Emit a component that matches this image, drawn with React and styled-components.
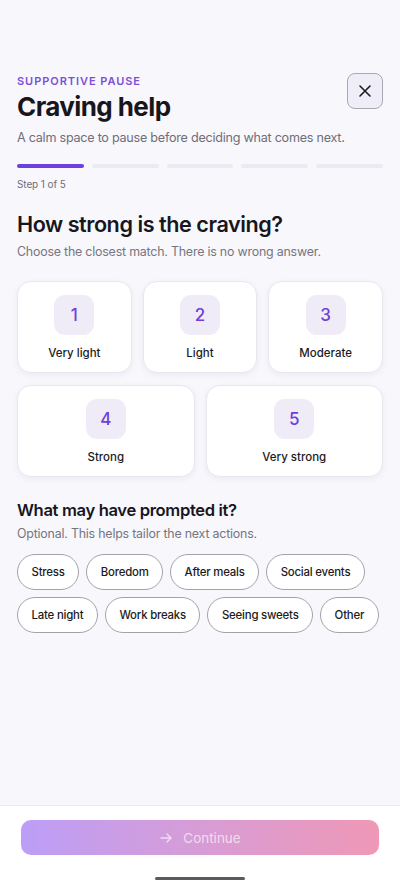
import React from "react";
import styled, { createGlobalStyle } from "styled-components";

const GlobalStyle = createGlobalStyle`
  * { box-sizing: border-box; }
  body {
    margin: 0;
    background: #f8f7fc;
    font-family: Inter, "Noto Sans", sans-serif;
    color: #17161c;
  }
`;

const Page = styled.div`
  min-height: 889px;
  display: flex;
  flex-direction: column;
  background: #f8f7fc;
`;

const Content = styled.main`
  flex: 1;
  padding: 72px 17px 0;
`;

const Header = styled.header`
  display: flex;
  justify-content: space-between;
  align-items: flex-start;
`;

const Eyebrow = styled.div`
  font-size: 11px;
  font-weight: 600;
  letter-spacing: 0.95px;
  color: #7c4fd6;
  margin-top: 2px;
  line-height: 14px;
`;

const Title = styled.h1`
  margin: 3px 0 0;
  font-size: 26px;
  font-weight: 700;
  letter-spacing: -0.6px;
  line-height: 32px;
`;

const CloseButton = styled.button`
  width: 36px;
  height: 36px;
  margin-top: 1px;
  border-radius: 8px;
  border: 1px solid #a9a7b2;
  background: #efedf8;
  display: flex;
  align-items: center;
  justify-content: center;
  padding: 0;
  color: #1c1b22;
`;

const Lead = styled.p`
  margin: 5px 0 0;
  font-size: 12.6px;
  color: #6f6e78;
  line-height: 20px;
  letter-spacing: -0.25px;
`;

const Progress = styled.div`
  display: grid;
  grid-template-columns: repeat(5, 1fr);
  gap: 8px;
  margin-top: 16px;
`;

const Segment = styled.div`
  height: 4px;
  border-radius: 2px;
  background: ${(p) => (p.$active ? "#6d3fe0" : "#ebeaf1")};
`;

const StepText = styled.div`
  margin-top: 9px;
  font-size: 10px;
  color: #6f6e78;
  line-height: 14px;
  letter-spacing: -0.1px;
`;

const Question = styled.h2`
  margin: 20px 0 0;
  font-size: 21.6px;
  font-weight: 600;
  letter-spacing: -0.45px;
  line-height: 26px;
`;

const Hint = styled.p`
  margin: ${(p) => (p.$small ? "4px" : "6px")} 0 0;
  font-size: 12.4px;
  color: #76757f;
  line-height: 18px;
  letter-spacing: -0.2px;
`;

const Grid = styled.div`
  display: grid;
  grid-template-columns: repeat(${(p) => p.$cols}, 1fr);
  gap: 11px;
  margin-top: ${(p) => p.$top}px;
`;

const Card = styled.button`
  height: 92px;
  background: #fff;
  border: 1px solid #e9e7ee;
  border-radius: 14px;
  box-shadow: 0 2px 6px rgba(40, 30, 80, 0.06);
  display: flex;
  flex-direction: column;
  align-items: center;
  padding: 13px 0 0;
  font-family: inherit;
  cursor: pointer;
`;

const Badge = styled.div`
  width: 40px;
  height: 40px;
  border-radius: 11px;
  background: #efecf8;
  color: #7040d8;
  font-size: 17px;
  font-weight: 500;
  display: flex;
  align-items: center;
  justify-content: center;
`;

const CardLabel = styled.div`
  margin-top: 11px;
  font-size: 11.5px;
  font-weight: 500;
  color: #1c1b22;
`;

const SubQuestion = styled.h3`
  margin: 22px 0 0;
  font-size: 16.6px;
  font-weight: 600;
  letter-spacing: -0.35px;
  line-height: 22px;
`;

const Chips = styled.div`
  display: flex;
  flex-wrap: wrap;
  gap: 7px;
  margin-top: 11px;
`;

const Chip = styled.button`
  height: 36px;
  padding: 0 13.5px;
  border-radius: 18px;
  border: 1px solid #a3a2ab;
  background: #fff;
  font-family: inherit;
  font-size: 11.4px;
  font-weight: 500;
  color: #1c1b22;
  letter-spacing: -0.2px;
`;

const Footer = styled.footer`
  background: #fff;
  border-top: 1px solid #ebeaf0;
  padding: 14px 21px 0;
  height: 84px;
  display: flex;
  flex-direction: column;
  align-items: center;
`;

const ContinueButton = styled.button`
  width: 100%;
  height: 35px;
  border: none;
  border-radius: 10px;
  background: linear-gradient(90deg, #bc9ef7 0%, #d79cd6 50%, #ef98b6 100%);
  color: rgba(255, 255, 255, 0.65);
  font-family: inherit;
  font-size: 13.5px;
  display: flex;
  align-items: center;
  justify-content: center;
  gap: 10px;
`;

const HomeBar = styled.div`
  width: 90px;
  height: 3px;
  border-radius: 2px;
  background: #5b5a60;
  margin-top: 22px;
`;

const levels = [
  { n: 1, label: "Very light" },
  { n: 2, label: "Light" },
  { n: 3, label: "Moderate" },
  { n: 4, label: "Strong" },
  { n: 5, label: "Very strong" },
];

const triggers = [
  "Stress",
  "Boredom",
  "After meals",
  "Social events",
  "Late night",
  "Work breaks",
  "Seeing sweets",
  "Other",
];

const LevelCard = ({ n, label }) => (
  <Card>
    <Badge>{n}</Badge>
    <CardLabel>{label}</CardLabel>
  </Card>
);

export default function App() {
  return (
    <Page>
      <GlobalStyle />
      <Content>
        <Header>
          <div>
            <Eyebrow>SUPPORTIVE PAUSE</Eyebrow>
            <Title>Craving help</Title>
          </div>
          <CloseButton aria-label="Close">
            <svg width="14" height="14" viewBox="0 0 14 14" fill="none" stroke="currentColor" strokeWidth="1.6" strokeLinecap="round">
              <path d="M2 2l10 10M12 2L2 12" />
            </svg>
          </CloseButton>
        </Header>
        <Lead>A calm space to pause before deciding what comes next.</Lead>
        <Progress>
          {[0, 1, 2, 3, 4].map((i) => (
            <Segment key={i} $active={i === 0} />
          ))}
        </Progress>
        <StepText>Step 1 of 5</StepText>

        <Question>How strong is the craving?</Question>
        <Hint>Choose the closest match. There is no wrong answer.</Hint>
        <Grid $cols={3} $top={20}>
          {levels.slice(0, 3).map((l) => (
            <LevelCard key={l.n} {...l} />
          ))}
        </Grid>
        <Grid $cols={2} $top={12}>
          {levels.slice(3).map((l) => (
            <LevelCard key={l.n} {...l} />
          ))}
        </Grid>

        <SubQuestion>What may have prompted it?</SubQuestion>
        <Hint $small>Optional. This helps tailor the next actions.</Hint>
        <Chips>
          {triggers.map((t) => (
            <Chip key={t}>{t}</Chip>
          ))}
        </Chips>
      </Content>
      <Footer>
        <ContinueButton disabled>
          <svg width="14" height="14" viewBox="0 0 14 14" fill="none" stroke="currentColor" strokeWidth="1.4" strokeLinecap="round" strokeLinejoin="round">
            <path d="M2 7h10M8 3l4 4-4 4" />
          </svg>
          Continue
        </ContinueButton>
        <HomeBar />
      </Footer>
    </Page>
  );
}
